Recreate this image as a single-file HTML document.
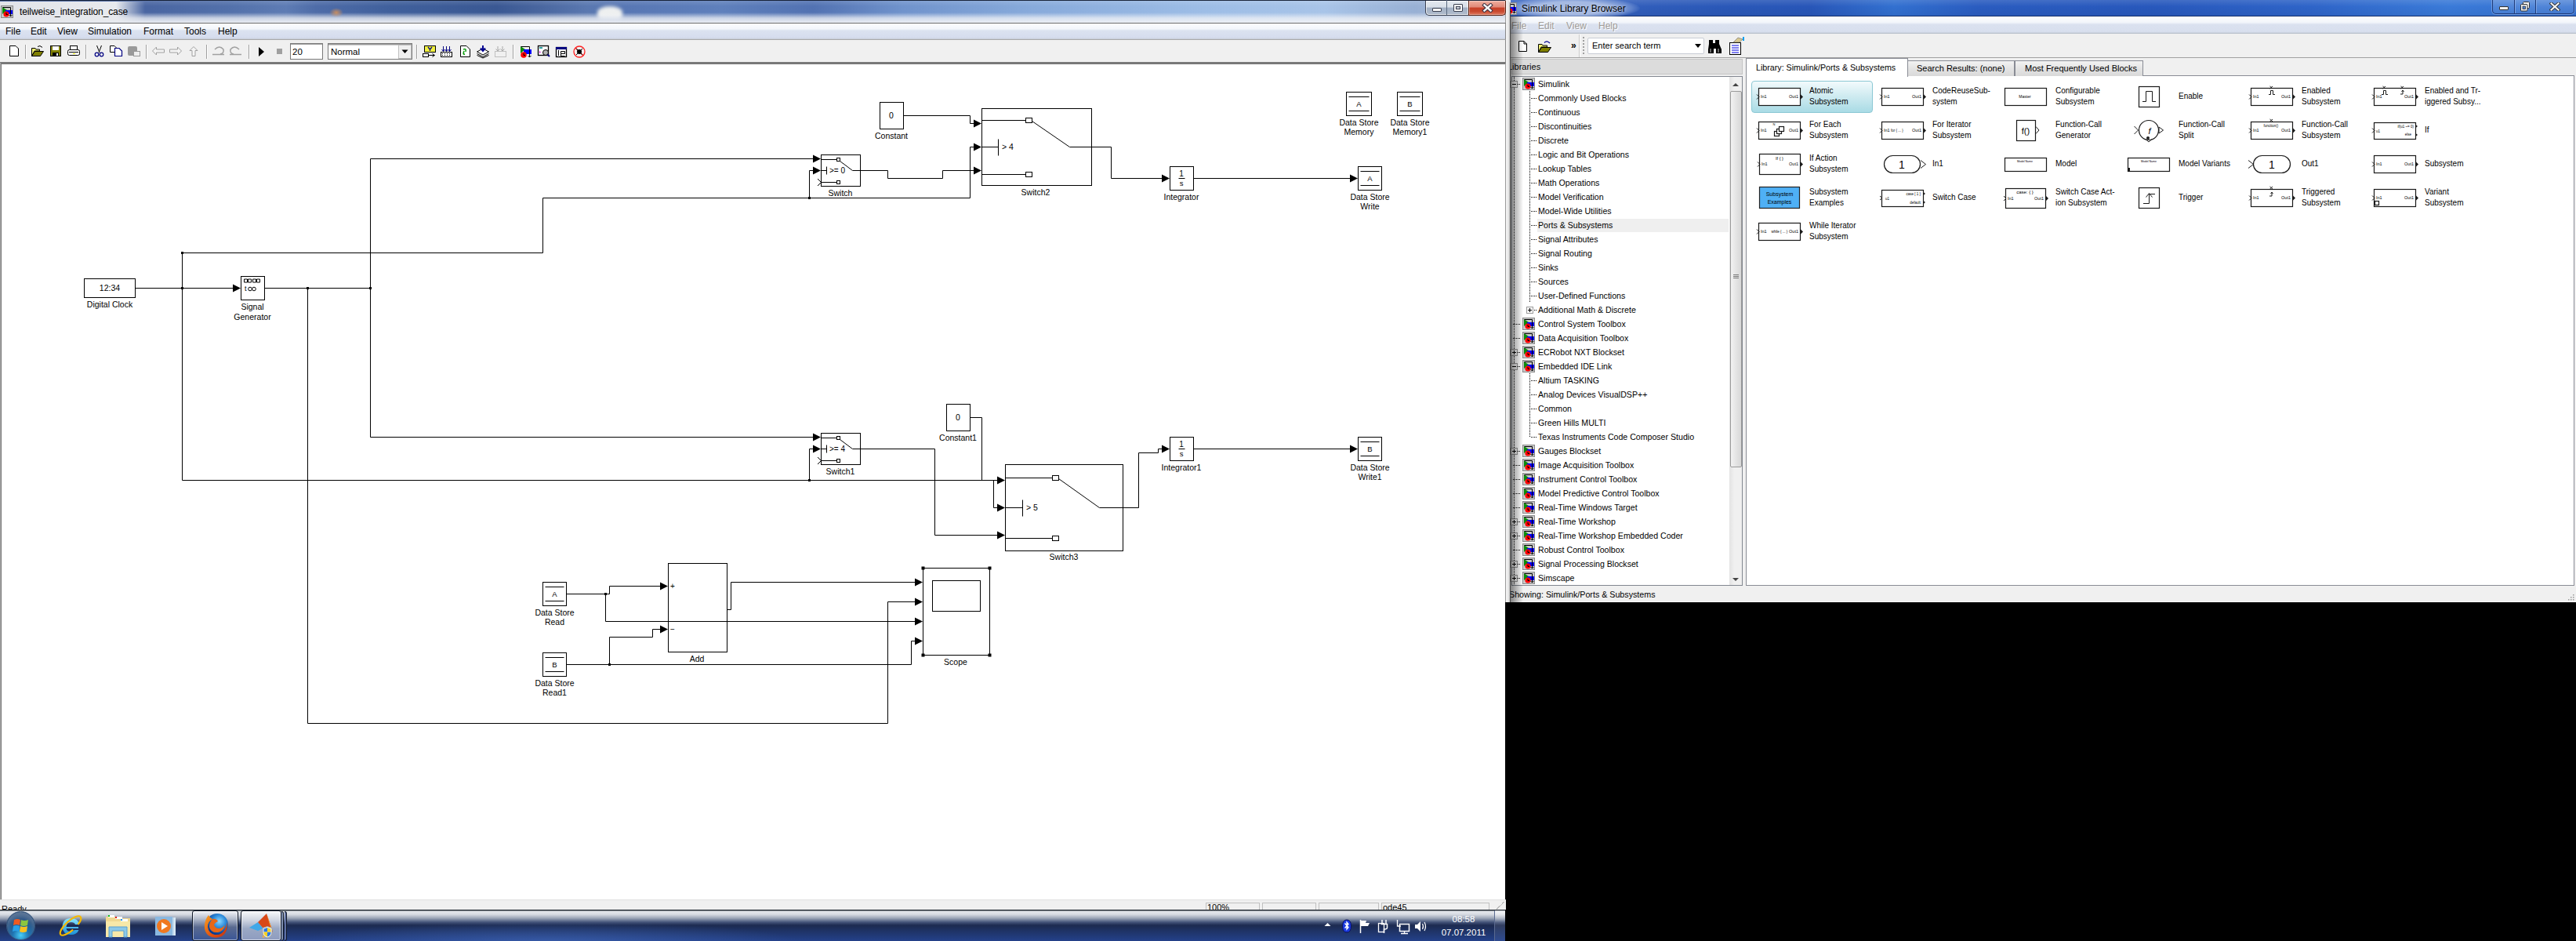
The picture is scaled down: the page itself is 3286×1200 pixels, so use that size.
<!DOCTYPE html>
<html><head><meta charset="utf-8"><title>Simulink</title>
<style>
*{margin:0;padding:0;box-sizing:border-box}
html,body{width:3286px;height:1200px;overflow:hidden;background:#000;font-family:"Liberation Sans", sans-serif;}
.a{position:absolute}
.dg{position:absolute;left:0;top:0}
.dg path,.dg rect,.dg circle{fill:none;stroke:#000;stroke-width:1}
.dg .f{fill:#000;stroke:none}
.dg text{fill:#000;stroke:none;font-family:"Liberation Sans", sans-serif}
.bx{fill:#fff;stroke:#1a1a1a;stroke-width:1.2}
.pt{fill:none;stroke:#1a1a1a;stroke-width:1}
.ft{fill:#1a1a1a;stroke:none}
.tn{fill:#000;font-family:"Liberation Sans", sans-serif}
</style></head><body>
<svg width="0" height="0" style="position:absolute"><defs>
<g id="libicon"><rect x="0.5" y="0.5" width="15" height="15" fill="#c8c8c8" stroke="#8a8a8a"/><path d="M2,2 L2,11 L8,6 Z" fill="#0a8a0a"/><rect x="6" y="6" width="9" height="5" fill="#0000ff"/><circle cx="7" cy="11" r="3.6" fill="#ff0000"/><path d="M2.5,2.5 H12.5 V14 M10.5,12 L12.5,14 L14.5,12 M7,9 V11.5 H9" fill="none" stroke="#000" stroke-width="1"/></g>
<g id="libicon2"><path d="M1,1 L1,10 L7,5 Z" fill="#0a8a0a"/><rect x="5" y="5" width="10" height="6" fill="#0000ff"/><circle cx="5" cy="12" r="3.8" fill="#ff0000"/><path d="M1.5,1.5 H12.5 V15 M10.5,13 L12.5,15 L14.5,13 M5,10 V12.5 H7" fill="none" stroke="#000" stroke-width="1"/></g>
</defs></svg>
<div class="a" style="left:0;top:0;width:1927px;height:768px;background:#eef0f3"></div><div class="a" style="left:1920px;top:0;width:7px;height:768px;background:linear-gradient(90deg,#9a9a9a 0px,#9a9a9a 1px,#f6f6f6 1px,#e8e8e8 4px,#d0d0d0 5.5px,#4a4a4a 6px,#4a4a4a 7px);border-top-right-radius:6px"></div><div class="a" style="left:0;top:0;width:1920px;height:29px;background:linear-gradient(90deg,#4a66a2 0%,#4a66a2 10%,#5270aa 15%,#5e7cb4 19%,#4e6ca8 21%,#40609c 26%,#3a5893 33%,#4a67a0 36%,#5a78b0 39%,#5877b4 41.5%,#5f80bc 48%,#5272b2 54%,#7093cc 60%,#86a9da 68%,#9dbde6 80%,#a8c4e8 88%,#98b0d4 94%,#b8c6dc 100%)"></div><div class="a" style="left:762px;top:8px;width:32px;height:16px;border-radius:50% 50% 20% 20%;background:#eef0f0;filter:blur(2px)"></div><div class="a" style="left:0;top:0;width:1920px;height:29px;background:linear-gradient(rgba(20,30,50,.95) 0px,rgba(20,30,50,.95) 1px,rgba(255,255,255,.12) 1px,rgba(255,255,255,0) 8px,rgba(255,255,255,0) 16px,rgba(240,242,246,.75) 23px,rgba(240,242,246,.95) 29px)"></div><div class="a" style="left:420px;top:10px;width:18px;height:12px;border-radius:50%;background:radial-gradient(rgba(230,150,80,.8),rgba(230,150,80,0) 70%)"></div><div class="a" style="left:0;top:2px;width:185px;height:26px;background:linear-gradient(90deg,#e2e4e9 0%,#e8eaee 80%,rgba(232,234,238,0) 100%)"></div><div class="a" style="left:25px;top:8px;font-size:12px;color:#000;white-space:nowrap;letter-spacing:-0.1px">teilweise_integration_case</div><svg class="a" style="left:1px;top:7px" width="16" height="16"><use href="#libicon"/></svg><div class="a" style="left:1818px;top:1px;width:56px;height:19px;border:1px solid #3a4050;border-top:none;border-radius:0 0 0 5px;background:linear-gradient(#e4e9f0,#d8dfe8 45%,#a2b0c4 50%,#b0bccc);box-shadow:inset 0 0 0 1px rgba(255,255,255,.7)"></div><div class="a" style="left:1845px;top:0;width:1px;height:19px;background:#5a6a80"></div><div class="a" style="left:1827px;top:10px;width:12px;height:5px;background:#f8f8f8;border:1px solid #3a4050;border-radius:1px"></div><div class="a" style="left:1854px;top:5px;width:12px;height:10px;border:1px solid #3a4050;background:#f8f8f8;border-radius:1px"><div class="a" style="left:2px;top:2px;width:6px;height:4px;border:1px solid #3a4050;background:#c8ccd8"></div></div><div class="a" style="left:1873px;top:1px;width:48px;height:19px;border:1px solid #5a2010;border-top:none;border-radius:0 0 5px 0;background:linear-gradient(#f0b0a0,#e08878 45%,#c84028 50%,#c84a30 75%,#e07a60);box-shadow:inset 0 0 0 1px rgba(255,255,255,.35)"></div><svg class="a" style="left:1890px;top:4px" width="15" height="12"><path d="M3.5,2.5 L11.5,9.5 M11.5,2.5 L3.5,9.5" stroke="#3a3040" stroke-width="4.5" stroke-linecap="square"/><path d="M3.5,2.5 L11.5,9.5 M11.5,2.5 L3.5,9.5" stroke="#f8f8f8" stroke-width="2.5" stroke-linecap="square"/></svg><div class="a" style="left:0;top:29px;width:1921px;height:21px;border-top:1px solid #6e6e6e;border-right:1px solid #888;background:linear-gradient(#fbfcfe 0%,#f3f6fb 35%,#dbe2f0 45%,#d6ddee 88%,#c8ced9 100%)"></div><div class="a" style="left:7px;top:33px;font-size:12px;color:#000">File</div><div class="a" style="left:39px;top:33px;font-size:12px;color:#000">Edit</div><div class="a" style="left:73px;top:33px;font-size:12px;color:#000">View</div><div class="a" style="left:112px;top:33px;font-size:12px;color:#000">Simulation</div><div class="a" style="left:183px;top:33px;font-size:12px;color:#000">Format</div><div class="a" style="left:235px;top:33px;font-size:12px;color:#000">Tools</div><div class="a" style="left:278px;top:33px;font-size:12px;color:#000">Help</div><div class="a" style="left:0;top:50px;width:1921px;height:31px;background:#f0f0f0;border-top:1px solid #a8a8a8;border-bottom:2px solid #7a7a7a;border-right:1px solid #888"></div><svg class="a" style="left:0;top:0" width="760" height="82"><rect x="32" y="57" width="1" height="18" fill="#a0a0a0"/><rect x="33" y="57" width="1" height="18" fill="#fff"/><rect x="109" y="57" width="1" height="18" fill="#a0a0a0"/><rect x="110" y="57" width="1" height="18" fill="#fff"/><rect x="186" y="57" width="1" height="18" fill="#a0a0a0"/><rect x="187" y="57" width="1" height="18" fill="#fff"/><rect x="263" y="57" width="1" height="18" fill="#a0a0a0"/><rect x="264" y="57" width="1" height="18" fill="#fff"/><rect x="317" y="57" width="1" height="18" fill="#a0a0a0"/><rect x="318" y="57" width="1" height="18" fill="#fff"/><rect x="531" y="57" width="1" height="18" fill="#a0a0a0"/><rect x="532" y="57" width="1" height="18" fill="#fff"/><rect x="654" y="57" width="1" height="18" fill="#a0a0a0"/><rect x="655" y="57" width="1" height="18" fill="#fff"/><path d="M12.5,58.5 H20 L23.5,62 V71.5 H12.5 Z" fill="#fff" stroke="#000"/><path d="M40.5,61.5 H45 L46,63 H50.5 V65 H44 L40.5,71.5 Z" fill="#f0f070" stroke="#000"/><path d="M40.5,71.5 L44.5,65.5 H55.5 L51.5,71.5 Z" fill="#7f7f00" stroke="#000"/><path d="M48,59.5 Q51,57 54,60.5" fill="none" stroke="#000"/><rect x="64.5" y="58.5" width="13" height="13" fill="#808000" stroke="#000"/><rect x="67" y="59" width="8" height="5" fill="#fff"/><rect x="67" y="67" width="8" height="4.5" fill="#000"/><rect x="72" y="68" width="2" height="3" fill="#fff"/><rect x="89.5" y="58.5" width="9" height="5" fill="#fff" stroke="#000"/><rect x="86.5" y="63.5" width="15" height="7" rx="2" fill="#fff" stroke="#000"/><rect x="88" y="66" width="12" height="1" fill="#000"/><rect x="93" y="68" width="3" height="1" fill="#e0e000"/><path d="M123.5,58 L127,67 M129.5,58 L126,67" stroke="#000" fill="none"/><circle cx="123.5" cy="69.5" r="2.3" fill="none" stroke="#000080" stroke-width="1.2"/><circle cx="129.5" cy="69.5" r="2.3" fill="none" stroke="#000080" stroke-width="1.2"/><path d="M140.5,58.5 H146 L148.5,61 V66.5 H140.5 Z" fill="#fff" stroke="#000"/><path d="M146.5,61.5 H152 L155.5,65 V71.5 H146.5 Z" fill="#fff" stroke="#000080" stroke-width="1.2"/><rect x="163" y="59" width="12" height="12" rx="2" fill="#9a9a9a"/><rect x="170.5" y="65.5" width="8" height="6" fill="#eee" stroke="#9a9a9a"/><path d="M194.5,65 L199.5,60 V63 H209.5 V67 H199.5 V70 Z" fill="#f4f4f4" stroke="#a0a0a0"/><path d="M231.5,65 L226.5,60 V63 H216.5 V67 H226.5 V70 Z" fill="#f4f4f4" stroke="#a0a0a0"/><path d="M247,59.5 L252,64.5 H249 V71.5 H245 V64.5 H242 Z" fill="#f4f4f4" stroke="#a0a0a0"/><path d="M274,63 Q280,57 285,63 Q286,68 281,69" fill="none" stroke="#a0a0a0" stroke-width="1.5"/><path d="M271,69.5 H286" stroke="#a0a0a0" stroke-width="1.5"/><path d="M305,63 Q299,57 294,63 Q293,68 298,69" fill="none" stroke="#a0a0a0" stroke-width="1.5"/><path d="M293,69.5 H308" stroke="#a0a0a0" stroke-width="1.5"/><path d="M330,60 L337,66 L330,72 Z" fill="#000"/><rect x="353" y="62" width="7" height="7" fill="#a0a0a0"/><rect x="370.5" y="55.5" width="41" height="20" fill="#fff" stroke="#7a7a7a"/><rect x="371" y="56" width="40" height="1" fill="#a0a0a0"/><text x="373" y="70" font-size="11.5" fill="#000" font-family="Liberation Sans">20</text><rect x="418.5" y="55.5" width="107" height="20" fill="#fff" stroke="#7a7a7a"/><rect x="419" y="56" width="106" height="1.5" fill="#9a9a9a"/><rect x="508.5" y="57.5" width="16" height="17" fill="#f0f0f0" stroke="#c0c0c0"/><path d="M512.5,63.5 H520.5 L516.5,68 Z" fill="#000"/><text x="422" y="70" font-size="11.5" fill="#000" font-family="Liberation Sans">Normal</text><rect x="541.5" y="58.5" width="14" height="8" fill="#f0f040" stroke="#000"/><path d="M546,60 L548.5,63 L551,60 M548.5,63 V65" stroke="#000080" stroke-width="1.3" fill="none"/><rect x="539.5" y="68.5" width="7" height="4" fill="#fff" stroke="#000"/><path d="M546.5,70.5 H554 M551.5,68.5 L554.5,70.5 L551.5,72.5" stroke="#000" fill="none"/><rect x="562.5" y="66.5" width="14" height="6" fill="#fff" stroke="#000"/><path d="M564,68.5 h1 m2,0 h1 m2,0 h1 m2,0 h1 M564,70.5 h1 m2,0 h1 m2,0 h1 m2,0 h1" stroke="#000"/><path d="M565.5,59 V65 M569.5,59 V65 M573.5,59 V65 M563.5,63 L565.5,65.5 L567.5,63 M567.5,63 L569.5,65.5 L571.5,63 M571.5,63 L573.5,65.5 L575.5,63" stroke="#000080" fill="none"/><path d="M587.5,58.5 H595 L599.5,63 V72.5 H587.5 Z" fill="#fff" stroke="#000"/><path d="M591,63 Q595,61 594,66 M593,69 Q590,70 592,65" stroke="#10a010" stroke-width="1.6" fill="none"/><path d="M608.5,66 L616,62 L623.5,66 L616,70 Z" fill="#fff" stroke="#000"/><path d="M608.5,68.5 L616,72.5 L623.5,68.5 M608.5,70.5 L616,74 L623.5,70.5" stroke="#000" fill="none"/><path d="M616,58 V64 M613,61.5 L616,65 L619,61.5" stroke="#000090" stroke-width="2" fill="none"/><rect x="631.5" y="65.5" width="14" height="7" fill="none" stroke="#c0c0c0"/><path d="M635,59 V65 M641,59 V65 M632.5,62.5 L635,65 L637.5,62.5 M638.5,62.5 L641,65 L643.5,62.5" stroke="#a8a8a8" fill="none"/><svg x="663" y="58" width="16" height="16"><use href="#libicon2"/></svg><rect x="686.5" y="58.5" width="13" height="12" fill="#fff" stroke="#000" stroke-width="1.3"/><rect x="688" y="60" width="4" height="2" fill="#30a0a0"/><path d="M688,65 L690,66.5 L688,68 Z" fill="#e020e0"/><circle cx="696" cy="67" r="3.5" fill="#b0b0b0" stroke="#000"/><path d="M698.5,69.5 L701,72" stroke="#000080" stroke-width="2"/><rect x="709.5" y="60.5" width="13" height="12" fill="#fff" stroke="#000" stroke-width="1.3"/><rect x="709" y="60" width="14" height="3" fill="#000080"/><rect x="712" y="64" width="1" height="7" fill="#000"/><path d="M715.5,65.5 h5 v3 h-5 z M715.5,68.5 v3 h5" fill="none" stroke="#000"/><circle cx="739" cy="66" r="7" fill="none" stroke="#ff2020" stroke-width="1.3"/><path d="M734,61 L744,71" stroke="#ff2020" stroke-width="1.3"/><circle cx="739" cy="66" r="3" fill="#000"/><path d="M735,62 l2,2 M743,62 l-2,2 M735,70 l2,-2 M743,70 l-2,-2" stroke="#000"/></svg><div class="a" style="left:0;top:81px;width:1920px;height:1067px;background:#fff;border-left:2px solid #767676;border-top:1px solid #767676"></div><div class="a" style="left:0;top:80px;width:1px;height:1067px;background:#a8a8a8"></div><svg class="dg" width="1920" height="1200" viewBox="0 0 1920 1200"><rect x="107.5" y="355.5" width="65" height="24"/><text x="140" y="370.5" font-size="10.5" text-anchor="middle" class="lbl">12:34</text><text x="140" y="392" font-size="10.5" text-anchor="middle" class="lbl">Digital Clock</text><rect x="307.5" y="352.5" width="30" height="30"/><text x="322" y="394.5" font-size="10.5" text-anchor="middle" class="lbl">Signal</text><text x="322" y="407.5" font-size="10.5" text-anchor="middle" class="lbl">Generator</text><path d="M311.5,360 h4 v-4 h-4 z M316.5,360 h4 v-4 h-4 z M322.5,360 h4 v-4 h-4 z M327.5,360 h4 v-4 h-4 z" fill="none"/><text x="312" y="371" font-size="9" text-anchor="start" class="lbl">t</text><circle cx="319" cy="368.5" r="2.3"/><circle cx="324" cy="368.5" r="2.3"/><rect x="1122.5" y="130.5" width="30" height="34"/><text x="1137" y="150.5" font-size="10.5" text-anchor="middle" class="lbl">0</text><text x="1137" y="176.5" font-size="10.5" text-anchor="middle" class="lbl">Constant</text><rect x="1207.5" y="515.5" width="30" height="34"/><text x="1222" y="535.5" font-size="10.5" text-anchor="middle" class="lbl">0</text><text x="1222" y="562" font-size="10.5" text-anchor="middle" class="lbl">Constant1</text><rect x="1047.5" y="197.5" width="50" height="40"/><path d="M1047.5,203.5 L1067.5,203.5"/><rect x="1067.5" y="201.5" width="4" height="4"/><path d="M1071.5,205.5 L1087.5,217.5 L1097.5,217.5"/><path d="M1047.5,217.5 L1054.5,217.5"/><path d="M1054.5,212.5 L1054.5,222.5"/><text x="1058" y="221" font-size="10" text-anchor="start" class="lbl">&gt;= 0</text><path d="M1047.5,232.5 L1067.5,232.5"/><rect x="1067.5" y="230.5" width="4" height="4"/><path d="M1043,228 L1047.5,232.5 L1043,237"/><text x="1072" y="249.5" font-size="10.5" text-anchor="middle" class="lbl">Switch</text><rect x="1047.5" y="552.5" width="50" height="40"/><path d="M1047.5,558.5 L1067.5,558.5"/><rect x="1067.5" y="556.5" width="4" height="4"/><path d="M1071.5,560.5 L1087.5,572.5 L1097.5,572.5"/><path d="M1047.5,572.5 L1054.5,572.5"/><path d="M1054.5,567.5 L1054.5,577.5"/><text x="1058" y="576" font-size="10" text-anchor="start" class="lbl">&gt;= 4</text><path d="M1047.5,587.5 L1067.5,587.5"/><rect x="1067.5" y="585.5" width="4" height="4"/><path d="M1043,583 L1047.5,587.5 L1043,592"/><text x="1072" y="604.5" font-size="10.5" text-anchor="middle" class="lbl">Switch1</text><rect x="1252.5" y="138.5" width="140" height="98"/><path d="M1252.5,153.5 L1308.5,153.5"/><rect x="1308.5" y="150.5" width="8" height="6"/><path d="M1316.5,154.5 L1364.5,187.5 L1392.5,187.5"/><path d="M1252.5,187.5 L1273.5,187.5"/><path d="M1273.5,177.5 L1273.5,198.5"/><text x="1278" y="191" font-size="10.5" text-anchor="start" class="lbl">&gt; 4</text><path d="M1252.5,222.5 L1308.5,222.5"/><rect x="1308.5" y="219.5" width="8" height="6"/><text x="1321" y="248.5" font-size="10.5" text-anchor="middle" class="lbl">Switch2</text><rect x="1282.5" y="592.5" width="150" height="110"/><path d="M1282.5,609.5 L1342.5,609.5"/><rect x="1342.5" y="606.5" width="8" height="6"/><path d="M1350.5,610.5 L1402.5,647.5 L1432.5,647.5"/><path d="M1282.5,647.5 L1304.5,647.5"/><path d="M1304.5,637.5 L1304.5,658.5"/><text x="1309" y="651" font-size="10.5" text-anchor="start" class="lbl">&gt; 5</text><path d="M1282.5,686.5 L1342.5,686.5"/><rect x="1342.5" y="683.5" width="8" height="6"/><text x="1357" y="714" font-size="10.5" text-anchor="middle" class="lbl">Switch3</text><rect x="1492.5" y="212.5" width="30" height="30"/><text x="1507" y="224.5" font-size="10" text-anchor="middle" class="lbl">1</text><path d="M1503.5,227.5 L1511.5,227.5"/><text x="1507" y="237" font-size="9.5" text-anchor="middle" class="lbl">s</text><text x="1507" y="254.5" font-size="10.5" text-anchor="middle" class="lbl">Integrator</text><rect x="1492.5" y="557.5" width="30" height="30"/><text x="1507" y="569.5" font-size="10" text-anchor="middle" class="lbl">1</text><path d="M1503.5,572.5 L1511.5,572.5"/><text x="1507" y="582" font-size="9.5" text-anchor="middle" class="lbl">s</text><text x="1507" y="599.5" font-size="10.5" text-anchor="middle" class="lbl">Integrator1</text><rect x="1732.5" y="212.5" width="30" height="30"/><path d="M1735.5,218.5 L1759.5,218.5"/><path d="M1735.5,236.5 L1759.5,236.5"/><text x="1747.5" y="230.5" font-size="9.5" text-anchor="middle" class="lbl">A</text><text x="1747.5" y="254.5" font-size="10.5" text-anchor="middle" class="lbl">Data Store</text><text x="1747.5" y="267" font-size="10.5" text-anchor="middle" class="lbl">Write</text><rect x="1732.5" y="557.5" width="30" height="30"/><path d="M1735.5,563.5 L1759.5,563.5"/><path d="M1735.5,581.5 L1759.5,581.5"/><text x="1747.5" y="575.5" font-size="9.5" text-anchor="middle" class="lbl">B</text><text x="1747.5" y="599.5" font-size="10.5" text-anchor="middle" class="lbl">Data Store</text><text x="1747.5" y="612" font-size="10.5" text-anchor="middle" class="lbl">Write1</text><rect x="1717.5" y="117.5" width="32" height="30"/><path d="M1720.5,123.5 L1746.5,123.5"/><path d="M1720.5,141.5 L1746.5,141.5"/><text x="1733.5" y="135.5" font-size="9.5" text-anchor="middle" class="lbl">A</text><text x="1733.5" y="159.5" font-size="10.5" text-anchor="middle" class="lbl">Data Store</text><text x="1733.5" y="172" font-size="10.5" text-anchor="middle" class="lbl">Memory</text><rect x="1782.5" y="117.5" width="32" height="30"/><path d="M1785.5,123.5 L1811.5,123.5"/><path d="M1785.5,141.5 L1811.5,141.5"/><text x="1798.5" y="135.5" font-size="9.5" text-anchor="middle" class="lbl">B</text><text x="1798.5" y="159.5" font-size="10.5" text-anchor="middle" class="lbl">Data Store</text><text x="1798.5" y="172" font-size="10.5" text-anchor="middle" class="lbl">Memory1</text><rect x="692.5" y="742.5" width="30" height="30"/><path d="M695.5,748.5 L719.5,748.5"/><path d="M695.5,766.5 L719.5,766.5"/><text x="707.5" y="760.5" font-size="9.5" text-anchor="middle" class="lbl">A</text><text x="707.5" y="784.5" font-size="10.5" text-anchor="middle" class="lbl">Data Store</text><text x="707.5" y="797" font-size="10.5" text-anchor="middle" class="lbl">Read</text><rect x="692.5" y="832.5" width="30" height="30"/><path d="M695.5,838.5 L719.5,838.5"/><path d="M695.5,856.5 L719.5,856.5"/><text x="707.5" y="850.5" font-size="9.5" text-anchor="middle" class="lbl">B</text><text x="707.5" y="874.5" font-size="10.5" text-anchor="middle" class="lbl">Data Store</text><text x="707.5" y="887" font-size="10.5" text-anchor="middle" class="lbl">Read1</text><rect x="852.5" y="718.5" width="75" height="113"/><text x="858" y="751" font-size="10" text-anchor="middle" class="lbl">+</text><text x="858" y="806" font-size="10" text-anchor="middle" class="lbl">−</text><text x="889" y="843.5" font-size="10.5" text-anchor="middle" class="lbl">Add</text><rect x="1177.5" y="724.5" width="85" height="111"/><rect x="1189.5" y="740.5" width="61" height="39"/><text x="1219" y="847.5" font-size="10.5" text-anchor="middle" class="lbl">Scope</text><rect class="f" x="1175.5" y="722.5" width="4" height="4"/><rect class="f" x="1260.5" y="722.5" width="4" height="4"/><rect class="f" x="1175.5" y="833.5" width="4" height="4"/><rect class="f" x="1260.5" y="833.5" width="4" height="4"/><path d="M172.5,367.5 L297.5,367.5"/><path class="f" d="M297,362.5 L307,367.5 L297,372.5 Z"/><rect class="f" x="231" y="366" width="3" height="3"/><rect class="f" x="231" y="321" width="3" height="3"/><path d="M232.5,322.5 L232.5,612.5"/><path d="M232.5,322.5 L692.5,322.5 L692.5,252.5 L1237.5,252.5 L1237.5,187.5 L1242.5,187.5"/><path class="f" d="M1242,182.5 L1252,187.5 L1242,192.5 Z"/><rect class="f" x="1031" y="251" width="3" height="3"/><path d="M1032.5,252.5 L1032.5,217.5 L1037.5,217.5"/><path class="f" d="M1037,212.5 L1047,217.5 L1037,222.5 Z"/><path d="M232.5,612.5 L1272.5,612.5"/><path class="f" d="M1272,607.5 L1282,612.5 L1272,617.5 Z"/><rect class="f" x="1031" y="611" width="3" height="3"/><path d="M1032.5,612.5 L1032.5,572.5 L1037.5,572.5"/><path class="f" d="M1037,567.5 L1047,572.5 L1037,577.5 Z"/><path d="M1267.5,612.5 L1267.5,647.5 L1272.5,647.5"/><path class="f" d="M1272,642.5 L1282,647.5 L1272,652.5 Z"/><path d="M1237.5,532.5 L1252.5,532.5 L1252.5,612.5"/><path d="M337.5,367.5 L472.5,367.5"/><rect class="f" x="391" y="366" width="3" height="3"/><rect class="f" x="471" y="366" width="3" height="3"/><path d="M392.5,367.5 L392.5,922.5 L1132.5,922.5 L1132.5,767.5 L1167.5,767.5"/><path class="f" d="M1167,762.5 L1177,767.5 L1167,772.5 Z"/><path d="M472.5,202.5 L472.5,557.5"/><path d="M472.5,202.5 L1037.5,202.5"/><path class="f" d="M1037,197.5 L1047,202.5 L1037,207.5 Z"/><path d="M472.5,557.5 L1037.5,557.5"/><path class="f" d="M1037,552.5 L1047,557.5 L1037,562.5 Z"/><path d="M1097.5,217.5 L1132.5,217.5 L1132.5,227.5 L1202.5,227.5 L1202.5,217.5 L1242.5,217.5"/><path class="f" d="M1242,212.5 L1252,217.5 L1242,222.5 Z"/><path d="M1152.5,147.5 L1237.5,147.5 L1237.5,157.5 L1242.5,157.5"/><path class="f" d="M1242,152.5 L1252,157.5 L1242,162.5 Z"/><path d="M1392.5,187.5 L1417.5,187.5 L1417.5,227.5 L1482.5,227.5"/><path class="f" d="M1482,222.5 L1492,227.5 L1482,232.5 Z"/><path d="M1522.5,227.5 L1722.5,227.5"/><path class="f" d="M1722,222.5 L1732,227.5 L1722,232.5 Z"/><path d="M1097.5,572.5 L1192.5,572.5 L1192.5,682.5 L1272.5,682.5"/><path class="f" d="M1272,677.5 L1282,682.5 L1272,687.5 Z"/><path d="M1432.5,647.5 L1452.5,647.5 L1452.5,577.5 L1477.5,577.5 L1477.5,572.5 L1482.5,572.5"/><path class="f" d="M1482,567.5 L1492,572.5 L1482,577.5 Z"/><path d="M1522.5,572.5 L1722.5,572.5"/><path class="f" d="M1722,567.5 L1732,572.5 L1722,577.5 Z"/><path d="M722.5,757.5 L777.5,757.5 L777.5,747.5 L842.5,747.5"/><path class="f" d="M842,742.5 L852,747.5 L842,752.5 Z"/><rect class="f" x="771" y="756" width="3" height="3"/><path d="M772.5,757.5 L772.5,792.5 L1167.5,792.5"/><path class="f" d="M1167,787.5 L1177,792.5 L1167,797.5 Z"/><path d="M722.5,847.5 L1162.5,847.5 L1162.5,817.5 L1167.5,817.5"/><path class="f" d="M1167,812.5 L1177,817.5 L1167,822.5 Z"/><rect class="f" x="776" y="846" width="3" height="3"/><path d="M777.5,847.5 L777.5,812.5 L832.5,812.5 L832.5,802.5 L842.5,802.5"/><path class="f" d="M842,797.5 L852,802.5 L842,807.5 Z"/><path d="M927.5,777.5 L932.5,777.5 L932.5,742.5 L1167.5,742.5"/><path class="f" d="M1167,737.5 L1177,742.5 L1167,747.5 Z"/></svg><div class="a" style="left:0;top:1147px;width:1921px;height:13px;background:#f0f0f0;border-top:1px solid #e0e0e0;overflow:hidden"><div class="a" style="left:2px;top:5px;font-size:11px;color:#000">Ready</div></div><div class="a" style="left:1538px;top:1151px;width:69px;height:9px;border:1px solid #c0c0c0;border-bottom:none;overflow:hidden"><div class="a" style="left:1px;top:-1px;font-size:11px;color:#000">100%</div></div><div class="a" style="left:1610px;top:1151px;width:69px;height:9px;border:1px solid #c0c0c0;border-bottom:none;overflow:hidden"><div class="a" style="left:1px;top:-1px;font-size:11px;color:#000"></div></div><div class="a" style="left:1682px;top:1151px;width:77px;height:9px;border:1px solid #c0c0c0;border-bottom:none;overflow:hidden"><div class="a" style="left:1px;top:-1px;font-size:11px;color:#000"></div></div><div class="a" style="left:1762px;top:1151px;width:138px;height:9px;border:1px solid #c0c0c0;border-bottom:none;overflow:hidden"><div class="a" style="left:1px;top:-1px;font-size:11px;color:#000">ode45</div></div><div class="a" style="left:1900px;top:1150px;width:20px;height:10px;background:linear-gradient(135deg,transparent 60%,#bbb 60%,#bbb 65%,transparent 65%)"></div><div class="a" style="left:0;top:1160px;width:1920px;height:40px;background:linear-gradient(#202830 0px,#202830 1px,#e4e7ec 2px,#d8dce3 6px,#9aa4b6 11px,#44547a 16px,#1c2a50 20px,#1f3468 28px,#24418a 40px)"></div><div class="a" style="left:0;top:1161px;width:1920px;height:39px;background:radial-gradient(ellipse 320px 26px at 700px 40px,rgba(70,110,190,.55),rgba(70,110,190,0))"></div><div class="a" style="left:8px;top:1162px;width:37px;height:37px;border-radius:50%;background:radial-gradient(circle at 50% 85%,#4ad0f8 0%,#1a70b0 30%,#0c3a70 60%,#0a2a58 100%);border:1px solid #3a5a80;box-shadow:inset 0 8px 10px rgba(255,255,255,.35)"></div><svg class="a" style="left:14px;top:1168px" width="26" height="26"><path d="M4,5 Q8,3 12,5 L11,12 Q7,10 3,12 Z" fill="#f05a20"/><path d="M13,5 Q17,7 22,5 L21,12 Q16,14 12,12 Z" fill="#8cc63f"/><path d="M3,13 Q7,11 11,13 L10,20 Q6,18 2,20 Z" fill="#2aa0e8"/><path d="M12,13 Q16,15 21,13 L20,20 Q15,22 11,20 Z" fill="#f8c020"/></svg><svg class="a" style="left:73px;top:1163px" width="34" height="34"><defs><linearGradient id="ieg" x1="0" y1="0" x2="0" y2="1"><stop offset="0" stop-color="#8ae8ff"/><stop offset="1" stop-color="#1a90d8"/></linearGradient></defs><path d="M27,19 H11.5 Q12,13 17.5,13 Q22,13 23,16 H28 Q27,8 17.5,8 Q7,8 6.5,19 Q7,29 17.5,29 Q25,29 27.5,23 H22 Q20.5,25 17.5,25 Q12,25 11.5,21 H27 Z" fill="url(#ieg)"/><ellipse cx="17" cy="17.5" rx="17" ry="6" transform="rotate(-42 17 17.5)" fill="none" stroke="#f4b800" stroke-width="2.2" stroke-dasharray="60 9" stroke-dashoffset="-20"/></svg><svg class="a" style="left:134px;top:1166px" width="34" height="30"><path d="M1,3 H14 L16,5 H32 V29 H1 Z" fill="#f0d890"/><rect x="4" y="1" width="8" height="3" fill="#fff"/><rect x="4" y="1" width="2" height="2" fill="#10c010"/><rect x="13" y="3" width="9" height="3" fill="#fff"/><rect x="13" y="3" width="2" height="2" fill="#e02020"/><rect x="20" y="6" width="9" height="3" fill="#fff"/><rect x="20" y="6" width="2" height="2" fill="#2090f0"/><path d="M1,9 H32 V29 H1 Z" fill="#f8e8a8"/><path d="M5,16 H28 V29 H24 V21 H9 V29 H5 Z" fill="#8cc8e8" stroke="#5aa0d0"/></svg><svg class="a" style="left:198px;top:1169px" width="30" height="26"><rect x="5" y="1" width="21" height="23" fill="#d8e8f4"/><rect x="3" y="1" width="21" height="23" fill="#c0d8ec"/><rect x="0" y="0" width="22" height="24" fill="#8ab8e0"/><circle cx="11" cy="12" r="9" fill="#f07820"/><path d="M8,7 L16,12 L8,17 Z" fill="#fff"/></svg><div class="a" style="left:245px;top:1161px;width:59px;height:39px;border:1px solid #101828;border-radius:3px;background:linear-gradient(#f2f4f8 0%,#b8c0d0 25%,#5a6a90 55%,#3a5698 100%);box-shadow:inset 0 0 0 1px rgba(255,255,255,.5)"></div><svg class="a" style="left:259px;top:1163px" width="34" height="34"><defs><radialGradient id="ffg" cx="60%" cy="35%" r="60%"><stop offset="0" stop-color="#8ad8ff"/><stop offset=".5" stop-color="#2a88d8"/><stop offset="1" stop-color="#0a3a90"/></radialGradient><linearGradient id="ffo" x1="0" y1="0" x2="1" y2="1"><stop offset="0" stop-color="#f8a020"/><stop offset=".6" stop-color="#e05010"/><stop offset="1" stop-color="#c03010"/></linearGradient></defs><circle cx="18" cy="16" r="14" fill="url(#ffg)"/><path d="M7,4 Q9,8 12,9 Q6,12 6,19 Q7,27 15,29 Q24,30 28,22 Q31,16 30,11 Q33,25 24,31 Q15,35 7,30 Q1,25 2,16 Q3,9 7,4 Z" fill="url(#ffo)"/><path d="M12,9 Q17,8 19,12 Q16,13 14,16 Q15,21 21,21 Q26,20 28,16 Q27,24 19,26 Q10,27 8,19 Q8,13 12,9 Z" fill="#e86818"/></svg><div class="a" style="left:307px;top:1161px;width:52px;height:39px;border:1px solid #101828;border-radius:3px;background:linear-gradient(#f8f9fb 0%,#d0d6e2 30%,#9aa8c4 60%,#8e9cc0 100%);box-shadow:inset 0 0 0 1px rgba(255,255,255,.6)"></div><div class="a" style="left:359px;top:1162px;width:3px;height:38px;border:1px solid #101828;border-left:none;border-radius:0 3px 3px 0;background:#8090b0"></div><div class="a" style="left:363px;top:1162px;width:3px;height:38px;border:1px solid #101828;border-left:none;border-radius:0 3px 3px 0;background:#6070a0"></div><svg class="a" style="left:316px;top:1164px" width="36" height="34"><path d="M2,19 L13,12 L20,20 L13,23 Z" fill="#40a8e8"/><path d="M13,12 L24,1 L32,24 L26,29 L20,20 Z" fill="#d84818"/><path d="M24,1 L28,15 L32,24 Z" fill="#f8a828"/><path d="M20,20 L26,29 L19,32 Z" fill="#f8b030"/><path d="M19,19.5 L25,17.5 L31,19.5 V25 Q31,30 25,32 Q19,30 19,25 Z" fill="#f4f4f4" stroke="#a0a0a0"/><path d="M20.5,20.5 L25,19 V24.5 H20.5 Z M25,24.5 H29.5 V25.5 Q29.5,29 25,30.5 Z" fill="#2878e8"/><path d="M25,19 L29.5,20.5 V24.5 H25 Z M20.5,24.5 H25 V30.5 Q20.5,29 20.5,25.5 Z" fill="#f8d020"/></svg><svg class="a" style="left:1685px;top:1171px" width="145" height="22"><path d="M4.5,10 L8.5,6 L12.5,10 Z" fill="#fff"/><path d="M33,2 Q27.5,2 27.5,10 Q27.5,18 33,18 Q38.5,18 38.5,10 Q38.5,2 33,2 Z" fill="#1a3ae0" stroke="#0a1060"/><path d="M30.5,6.5 L35,11.5 L33,14 V5 L35,7.5 L30.5,12.5" stroke="#fff" stroke-width="1.3" fill="none"/><path d="M50.5,2 V19" stroke="#fff" stroke-width="1.5"/><path d="M51,3 H58 L57,6 H62 L60,10 H51 Z" fill="#fff"/><rect x="73.5" y="6.5" width="7" height="11" fill="none" stroke="#fff" stroke-width="1.3"/><path d="M78,2 V8 M83,2 V8 M76.5,7.5 H84.5 V12 Q84.5,14 80.5,14 V19" stroke="#fff" stroke-width="1.5" fill="none"/><path d="M97.5,2 V10 H102" stroke="#fff" stroke-width="1.3" fill="none"/><rect x="100.5" y="7.5" width="12" height="9" fill="none" stroke="#fff" stroke-width="1.5"/><path d="M106.5,17 V19 M102,19.5 H111" stroke="#fff" stroke-width="1.3"/><path d="M120,8 H123 L127,4 V17 L123,13 H120 Z" fill="#fff"/><path d="M129.5,7 Q131.5,10.5 129.5,14 M132,5 Q135,10.5 132,16" stroke="#fff" stroke-width="1.2" fill="none"/></svg><div class="a" style="left:1838px;top:1164px;width:58px;text-align:center;font-size:11.5px;color:#fff;line-height:16.5px">08:58<br>07.07.2011</div><div class="a" style="left:1906px;top:1161px;width:14px;height:39px;border-left:1px solid #5a6a90;background:linear-gradient(rgba(255,255,255,.5),rgba(255,255,255,.1) 40%,rgba(255,255,255,.05))"></div><div class="a" id="rw" style="left:1927px;top:0;width:1359px;height:768px;background:#f0f0f0;overflow:hidden"><div class="a" style="left:0;top:0;width:1359px;height:21px;background:linear-gradient(90deg,#3a66c0 0%,#2a58b8 20%,#2856b8 28%,#3270d0 36%,#2a5cc0 44%,#2858bc 60%,#2e64c8 75%,#3a7ad8 88%,#3470d0 100%);border-bottom:1px solid #143070"></div><div class="a" style="left:0;top:0;width:1359px;height:21px;background:linear-gradient(rgba(255,255,255,.12),rgba(255,255,255,0) 40%,rgba(0,0,0,.05))"></div><div class="a" style="left:-10px;top:-4px;width:175px;height:29px;border-radius:50%;background:radial-gradient(ellipse at center,rgba(190,205,235,.8) 40%,rgba(150,175,225,.45) 62%,rgba(120,150,220,0) 72%)"></div><svg class="a" style="left:-8px;top:3px" width="16" height="16"><use href="#libicon"/></svg><div class="a" style="left:14px;top:4px;font-size:12px;color:#000;white-space:nowrap;text-shadow:0 0 4px rgba(255,255,255,.6)">Simulink Library Browser</div><div class="a" style="left:0;top:21px;width:1359px;height:22px;background:linear-gradient(#fcfdfe 0%,#f3f6fb 35%,#dae1ef 50%,#d8dfee 92%,#c9d0dc 100%);border-bottom:1px solid #b9c0cc"></div><div class="a" style="left:1px;top:26px;font-size:12px;color:#a09c98;text-shadow:1px 1px 0 #fff">File</div><div class="a" style="left:35px;top:26px;font-size:12px;color:#a09c98;text-shadow:1px 1px 0 #fff">Edit</div><div class="a" style="left:71px;top:26px;font-size:12px;color:#a09c98;text-shadow:1px 1px 0 #fff">View</div><div class="a" style="left:112px;top:26px;font-size:12px;color:#a09c98;text-shadow:1px 1px 0 #fff">Help</div><div class="a" style="left:0;top:43px;width:1359px;height:31px;background:#f0f0f0;border-bottom:1px solid #a0a0a0"></div><div class="a" style="left:87px;top:44px;width:1px;height:29px;background:#c8c8c8;box-shadow:1px 0 0 #fff"></div><div class="a" style="left:92px;top:47px;width:2px;height:23px;background:repeating-linear-gradient(#a0a0a0 0 2px,transparent 2px 4px)"></div><div class="a" style="left:98px;top:48px;width:149px;height:21px;background:#fff;border:1px solid #c8ccd4;border-radius:2px"></div><div class="a" style="left:104px;top:52px;font-size:11px;color:#000">Enter search term</div><div class="a" style="left:235px;top:56px;width:0;height:0;border-left:4px solid transparent;border-right:4px solid transparent;border-top:5px solid #000"></div><div class="a" style="left:77px;top:51px;font-size:12px;font-weight:bold;color:#000">&#187;</div><svg class="a" style="left:0;top:44px" width="310" height="30"><path d="M10.5,8.5 H17 L20.5,12 V21.5 H10.5 Z" fill="#fff" stroke="#000"/><path d="M17,8.5 V12 H20.5" fill="none" stroke="#000"/><path d="M35.5,12.5 H40 L41,14 H46.5 V16 H39 L35.5,22.5 Z" fill="#f0f070" stroke="#000"/><path d="M35.5,22.5 L39.5,16.5 H51.5 L47.5,22.5 Z" fill="#7f7f00" stroke="#000"/><path d="M43,10.5 Q46,7 50,11" fill="none" stroke="#000090" stroke-width="1.2"/><path d="M253,7 h5 v4 h3 v-4 h5 v5 l3,7 v5 h-7 v-6 h-3 v6 h-7 v-5 l1,-7 z" fill="#000"/><rect x="254" y="18" width="2" height="5" fill="#666"/><rect x="264" y="18" width="2" height="5" fill="#666"/><rect x="279.5" y="10.5" width="14" height="15" fill="#fff" stroke="#000"/><path d="M282,14 h9 M282,17 h9 M282,20 h9 M282,23 h9" stroke="#0000e0"/><path d="M284,10 L290,4 L296,6 L292,10 Z" fill="#d8c890" stroke="#666" stroke-width=".6"/><rect x="296" y="3" width="2" height="5" fill="#10a0f0"/></svg><div class="a" style="left:1px;top:75px;width:295px;height:20px;background:#dcdcdc;border:1px solid #c4c4c4"></div><div class="a" style="left:-4px;top:79px;font-size:11px;color:#000">Libraries</div><div class="a" style="left:1px;top:97px;width:295px;height:650px;background:#fff;border:1px solid #828790"></div><div class="a" style="left:34px;top:279px;width:244px;height:17px;background:#efefef"></div><div class="a" style="left:279px;top:98px;width:16px;height:648px;background:linear-gradient(90deg,#e3e3e3,#f0f0f0 40%,#f0f0f0)"></div><div class="a" style="left:280px;top:116px;width:15px;height:480px;border:1px solid #9a9a9a;border-radius:2px;background:linear-gradient(90deg,#f3f3f3,#e4e4e4 50%,#d8d8d8)"></div><div class="a" style="left:284px;top:350px;width:7px;height:6px;background:repeating-linear-gradient(#777 0 1px,transparent 1px 2px)"></div><div class="a" style="left:283px;top:106px;width:0;height:0;border-left:4px solid transparent;border-right:4px solid transparent;border-bottom:4px solid #444"></div><div class="a" style="left:283px;top:737px;width:0;height:0;border-left:4px solid transparent;border-right:4px solid transparent;border-top:4px solid #444"></div><div class="a" style="left:4px;top:98px;width:1px;height:648px;background:repeating-linear-gradient(#000 0 1px,transparent 1px 2px)"></div><div class="a" style="left:24px;top:116px;width:1px;height:270px;background:repeating-linear-gradient(#000 0 1px,transparent 1px 2px)"></div><div class="a" style="left:24px;top:476px;width:1px;height:81px;background:repeating-linear-gradient(#000 0 1px,transparent 1px 2px)"></div><div class="a" style="left:35px;top:101px;font-size:10.6px;color:#000;white-space:nowrap">Simulink</div><svg class="a" style="left:15px;top:99px" width="16" height="16"><use href="#libicon"/></svg><div class="a" style="left:3px;top:107px;width:10px;height:1px;background:repeating-linear-gradient(90deg,#000 0 1px,transparent 1px 2px)"></div><div class="a" style="left:0px;top:103px;width:9px;height:9px;border:1px solid #999;background:#f4f4f4"><div class="a" style="left:1px;top:3px;width:5px;height:1px;background:#000"></div></div><div class="a" style="left:35px;top:119px;font-size:10.6px;color:#000;white-space:nowrap">Commonly Used Blocks</div><div class="a" style="left:26px;top:125px;width:8px;height:1px;background:repeating-linear-gradient(90deg,#000 0 1px,transparent 1px 2px)"></div><div class="a" style="left:35px;top:137px;font-size:10.6px;color:#000;white-space:nowrap">Continuous</div><div class="a" style="left:26px;top:143px;width:8px;height:1px;background:repeating-linear-gradient(90deg,#000 0 1px,transparent 1px 2px)"></div><div class="a" style="left:35px;top:155px;font-size:10.6px;color:#000;white-space:nowrap">Discontinuities</div><div class="a" style="left:26px;top:161px;width:8px;height:1px;background:repeating-linear-gradient(90deg,#000 0 1px,transparent 1px 2px)"></div><div class="a" style="left:35px;top:173px;font-size:10.6px;color:#000;white-space:nowrap">Discrete</div><div class="a" style="left:26px;top:179px;width:8px;height:1px;background:repeating-linear-gradient(90deg,#000 0 1px,transparent 1px 2px)"></div><div class="a" style="left:35px;top:191px;font-size:10.6px;color:#000;white-space:nowrap">Logic and Bit Operations</div><div class="a" style="left:26px;top:197px;width:8px;height:1px;background:repeating-linear-gradient(90deg,#000 0 1px,transparent 1px 2px)"></div><div class="a" style="left:35px;top:209px;font-size:10.6px;color:#000;white-space:nowrap">Lookup Tables</div><div class="a" style="left:26px;top:215px;width:8px;height:1px;background:repeating-linear-gradient(90deg,#000 0 1px,transparent 1px 2px)"></div><div class="a" style="left:35px;top:227px;font-size:10.6px;color:#000;white-space:nowrap">Math Operations</div><div class="a" style="left:26px;top:233px;width:8px;height:1px;background:repeating-linear-gradient(90deg,#000 0 1px,transparent 1px 2px)"></div><div class="a" style="left:35px;top:245px;font-size:10.6px;color:#000;white-space:nowrap">Model Verification</div><div class="a" style="left:26px;top:251px;width:8px;height:1px;background:repeating-linear-gradient(90deg,#000 0 1px,transparent 1px 2px)"></div><div class="a" style="left:35px;top:263px;font-size:10.6px;color:#000;white-space:nowrap">Model-Wide Utilities</div><div class="a" style="left:26px;top:269px;width:8px;height:1px;background:repeating-linear-gradient(90deg,#000 0 1px,transparent 1px 2px)"></div><div class="a" style="left:35px;top:281px;font-size:10.6px;color:#000;white-space:nowrap">Ports &amp; Subsystems</div><div class="a" style="left:26px;top:287px;width:8px;height:1px;background:repeating-linear-gradient(90deg,#000 0 1px,transparent 1px 2px)"></div><div class="a" style="left:35px;top:299px;font-size:10.6px;color:#000;white-space:nowrap">Signal Attributes</div><div class="a" style="left:26px;top:305px;width:8px;height:1px;background:repeating-linear-gradient(90deg,#000 0 1px,transparent 1px 2px)"></div><div class="a" style="left:35px;top:317px;font-size:10.6px;color:#000;white-space:nowrap">Signal Routing</div><div class="a" style="left:26px;top:323px;width:8px;height:1px;background:repeating-linear-gradient(90deg,#000 0 1px,transparent 1px 2px)"></div><div class="a" style="left:35px;top:335px;font-size:10.6px;color:#000;white-space:nowrap">Sinks</div><div class="a" style="left:26px;top:341px;width:8px;height:1px;background:repeating-linear-gradient(90deg,#000 0 1px,transparent 1px 2px)"></div><div class="a" style="left:35px;top:353px;font-size:10.6px;color:#000;white-space:nowrap">Sources</div><div class="a" style="left:26px;top:359px;width:8px;height:1px;background:repeating-linear-gradient(90deg,#000 0 1px,transparent 1px 2px)"></div><div class="a" style="left:35px;top:371px;font-size:10.6px;color:#000;white-space:nowrap">User-Defined Functions</div><div class="a" style="left:26px;top:377px;width:8px;height:1px;background:repeating-linear-gradient(90deg,#000 0 1px,transparent 1px 2px)"></div><div class="a" style="left:35px;top:389px;font-size:10.6px;color:#000;white-space:nowrap">Additional Math &amp; Discrete</div><div class="a" style="left:26px;top:395px;width:8px;height:1px;background:repeating-linear-gradient(90deg,#000 0 1px,transparent 1px 2px)"></div><div class="a" style="left:20px;top:391px;width:9px;height:9px;border:1px solid #999;background:#fff"><div class="a" style="left:1px;top:3px;width:5px;height:1px;background:#000"></div><div class="a" style="left:3px;top:1px;width:1px;height:5px;background:#000"></div></div><div class="a" style="left:35px;top:407px;font-size:10.6px;color:#000;white-space:nowrap">Control System Toolbox</div><svg class="a" style="left:15px;top:405px" width="16" height="16"><use href="#libicon"/></svg><div class="a" style="left:3px;top:413px;width:10px;height:1px;background:repeating-linear-gradient(90deg,#000 0 1px,transparent 1px 2px)"></div><div class="a" style="left:35px;top:425px;font-size:10.6px;color:#000;white-space:nowrap">Data Acquisition Toolbox</div><svg class="a" style="left:15px;top:423px" width="16" height="16"><use href="#libicon"/></svg><div class="a" style="left:3px;top:431px;width:10px;height:1px;background:repeating-linear-gradient(90deg,#000 0 1px,transparent 1px 2px)"></div><div class="a" style="left:35px;top:443px;font-size:10.6px;color:#000;white-space:nowrap">ECRobot NXT Blockset</div><svg class="a" style="left:15px;top:441px" width="16" height="16"><use href="#libicon"/></svg><div class="a" style="left:3px;top:449px;width:10px;height:1px;background:repeating-linear-gradient(90deg,#000 0 1px,transparent 1px 2px)"></div><div class="a" style="left:0px;top:445px;width:9px;height:9px;border:1px solid #999;background:#f4f4f4"><div class="a" style="left:1px;top:3px;width:5px;height:1px;background:#000"></div><div class="a" style="left:3px;top:1px;width:1px;height:5px;background:#000"></div></div><div class="a" style="left:35px;top:461px;font-size:10.6px;color:#000;white-space:nowrap">Embedded IDE Link</div><svg class="a" style="left:15px;top:459px" width="16" height="16"><use href="#libicon"/></svg><div class="a" style="left:3px;top:467px;width:10px;height:1px;background:repeating-linear-gradient(90deg,#000 0 1px,transparent 1px 2px)"></div><div class="a" style="left:0px;top:463px;width:9px;height:9px;border:1px solid #999;background:#f4f4f4"><div class="a" style="left:1px;top:3px;width:5px;height:1px;background:#000"></div></div><div class="a" style="left:35px;top:479px;font-size:10.6px;color:#000;white-space:nowrap">Altium TASKING</div><div class="a" style="left:26px;top:485px;width:8px;height:1px;background:repeating-linear-gradient(90deg,#000 0 1px,transparent 1px 2px)"></div><div class="a" style="left:35px;top:497px;font-size:10.6px;color:#000;white-space:nowrap">Analog Devices VisualDSP++</div><div class="a" style="left:26px;top:503px;width:8px;height:1px;background:repeating-linear-gradient(90deg,#000 0 1px,transparent 1px 2px)"></div><div class="a" style="left:35px;top:515px;font-size:10.6px;color:#000;white-space:nowrap">Common</div><div class="a" style="left:26px;top:521px;width:8px;height:1px;background:repeating-linear-gradient(90deg,#000 0 1px,transparent 1px 2px)"></div><div class="a" style="left:35px;top:533px;font-size:10.6px;color:#000;white-space:nowrap">Green Hills MULTI</div><div class="a" style="left:26px;top:539px;width:8px;height:1px;background:repeating-linear-gradient(90deg,#000 0 1px,transparent 1px 2px)"></div><div class="a" style="left:35px;top:551px;font-size:10.6px;color:#000;white-space:nowrap">Texas Instruments Code Composer Studio</div><div class="a" style="left:26px;top:557px;width:8px;height:1px;background:repeating-linear-gradient(90deg,#000 0 1px,transparent 1px 2px)"></div><div class="a" style="left:35px;top:569px;font-size:10.6px;color:#000;white-space:nowrap">Gauges Blockset</div><svg class="a" style="left:15px;top:567px" width="16" height="16"><use href="#libicon"/></svg><div class="a" style="left:3px;top:575px;width:10px;height:1px;background:repeating-linear-gradient(90deg,#000 0 1px,transparent 1px 2px)"></div><div class="a" style="left:0px;top:571px;width:9px;height:9px;border:1px solid #999;background:#f4f4f4"><div class="a" style="left:1px;top:3px;width:5px;height:1px;background:#000"></div><div class="a" style="left:3px;top:1px;width:1px;height:5px;background:#000"></div></div><div class="a" style="left:35px;top:587px;font-size:10.6px;color:#000;white-space:nowrap">Image Acquisition Toolbox</div><svg class="a" style="left:15px;top:585px" width="16" height="16"><use href="#libicon"/></svg><div class="a" style="left:3px;top:593px;width:10px;height:1px;background:repeating-linear-gradient(90deg,#000 0 1px,transparent 1px 2px)"></div><div class="a" style="left:35px;top:605px;font-size:10.6px;color:#000;white-space:nowrap">Instrument Control Toolbox</div><svg class="a" style="left:15px;top:603px" width="16" height="16"><use href="#libicon"/></svg><div class="a" style="left:3px;top:611px;width:10px;height:1px;background:repeating-linear-gradient(90deg,#000 0 1px,transparent 1px 2px)"></div><div class="a" style="left:35px;top:623px;font-size:10.6px;color:#000;white-space:nowrap">Model Predictive Control Toolbox</div><svg class="a" style="left:15px;top:621px" width="16" height="16"><use href="#libicon"/></svg><div class="a" style="left:3px;top:629px;width:10px;height:1px;background:repeating-linear-gradient(90deg,#000 0 1px,transparent 1px 2px)"></div><div class="a" style="left:35px;top:641px;font-size:10.6px;color:#000;white-space:nowrap">Real-Time Windows Target</div><svg class="a" style="left:15px;top:639px" width="16" height="16"><use href="#libicon"/></svg><div class="a" style="left:3px;top:647px;width:10px;height:1px;background:repeating-linear-gradient(90deg,#000 0 1px,transparent 1px 2px)"></div><div class="a" style="left:35px;top:659px;font-size:10.6px;color:#000;white-space:nowrap">Real-Time Workshop</div><svg class="a" style="left:15px;top:657px" width="16" height="16"><use href="#libicon"/></svg><div class="a" style="left:3px;top:665px;width:10px;height:1px;background:repeating-linear-gradient(90deg,#000 0 1px,transparent 1px 2px)"></div><div class="a" style="left:0px;top:661px;width:9px;height:9px;border:1px solid #999;background:#f4f4f4"><div class="a" style="left:1px;top:3px;width:5px;height:1px;background:#000"></div><div class="a" style="left:3px;top:1px;width:1px;height:5px;background:#000"></div></div><div class="a" style="left:35px;top:677px;font-size:10.6px;color:#000;white-space:nowrap">Real-Time Workshop Embedded Coder</div><svg class="a" style="left:15px;top:675px" width="16" height="16"><use href="#libicon"/></svg><div class="a" style="left:3px;top:683px;width:10px;height:1px;background:repeating-linear-gradient(90deg,#000 0 1px,transparent 1px 2px)"></div><div class="a" style="left:0px;top:679px;width:9px;height:9px;border:1px solid #999;background:#f4f4f4"><div class="a" style="left:1px;top:3px;width:5px;height:1px;background:#000"></div><div class="a" style="left:3px;top:1px;width:1px;height:5px;background:#000"></div></div><div class="a" style="left:35px;top:695px;font-size:10.6px;color:#000;white-space:nowrap">Robust Control Toolbox</div><svg class="a" style="left:15px;top:693px" width="16" height="16"><use href="#libicon"/></svg><div class="a" style="left:3px;top:701px;width:10px;height:1px;background:repeating-linear-gradient(90deg,#000 0 1px,transparent 1px 2px)"></div><div class="a" style="left:35px;top:713px;font-size:10.6px;color:#000;white-space:nowrap">Signal Processing Blockset</div><svg class="a" style="left:15px;top:711px" width="16" height="16"><use href="#libicon"/></svg><div class="a" style="left:3px;top:719px;width:10px;height:1px;background:repeating-linear-gradient(90deg,#000 0 1px,transparent 1px 2px)"></div><div class="a" style="left:0px;top:715px;width:9px;height:9px;border:1px solid #999;background:#f4f4f4"><div class="a" style="left:1px;top:3px;width:5px;height:1px;background:#000"></div><div class="a" style="left:3px;top:1px;width:1px;height:5px;background:#000"></div></div><div class="a" style="left:35px;top:731px;font-size:10.6px;color:#000;white-space:nowrap">Simscape</div><svg class="a" style="left:15px;top:729px" width="16" height="16"><use href="#libicon"/></svg><div class="a" style="left:3px;top:737px;width:10px;height:1px;background:repeating-linear-gradient(90deg,#000 0 1px,transparent 1px 2px)"></div><div class="a" style="left:0px;top:733px;width:9px;height:9px;border:1px solid #999;background:#f4f4f4"><div class="a" style="left:1px;top:3px;width:5px;height:1px;background:#000"></div><div class="a" style="left:3px;top:1px;width:1px;height:5px;background:#000"></div></div><div class="a" style="left:300px;top:96px;width:1057px;height:651px;background:#fff;border:1px solid #898c95"></div><div class="a" style="left:506px;top:77px;width:137px;height:20px;background:linear-gradient(#f2f2f2,#e4e4e4 50%,#d9d9d9);border:1px solid #898c95;border-bottom:none"></div><div class="a" style="left:643px;top:77px;width:164px;height:20px;background:linear-gradient(#f2f2f2,#e4e4e4 50%,#d9d9d9);border:1px solid #898c95;border-bottom:none"></div><div class="a" style="left:300px;top:74px;width:207px;height:24px;background:#fff;border:1px solid #898c95;border-bottom:none"></div><div class="a" style="left:313px;top:80px;font-size:10.7px;color:#000;white-space:nowrap">Library: Simulink/Ports &amp; Subsystems</div><div class="a" style="left:518px;top:81px;font-size:11px;color:#000;white-space:nowrap">Search Results: (none)</div><div class="a" style="left:656px;top:81px;font-size:11px;color:#000;white-space:nowrap">Most Frequently Used Blocks</div><div class="a" style="left:307px;top:103px;width:155px;height:41px;border:1px solid #8cc8d4;border-radius:4px;background:linear-gradient(#f2fafc,#cdeaf0 50%,#a9dbe5)"></div><div class="a" style="left:381px;top:109px;font-size:10px;line-height:14px;color:#000;white-space:nowrap">Atomic<br>Subsystem</div><div class="a" style="left:381px;top:152px;font-size:10px;line-height:14px;color:#000;white-space:nowrap">For Each<br>Subsystem</div><div class="a" style="left:381px;top:195px;font-size:10px;line-height:14px;color:#000;white-space:nowrap">If Action<br>Subsystem</div><div class="a" style="left:381px;top:238px;font-size:10px;line-height:14px;color:#000;white-space:nowrap">Subsystem<br>Examples</div><div class="a" style="left:381px;top:281px;font-size:10px;line-height:14px;color:#000;white-space:nowrap">While Iterator<br>Subsystem</div><div class="a" style="left:538px;top:109px;font-size:10px;line-height:14px;color:#000;white-space:nowrap">CodeReuseSub-<br>system</div><div class="a" style="left:538px;top:152px;font-size:10px;line-height:14px;color:#000;white-space:nowrap">For Iterator<br>Subsystem</div><div class="a" style="left:538px;top:202px;font-size:10px;line-height:14px;color:#000;white-space:nowrap">In1</div><div class="a" style="left:538px;top:245px;font-size:10px;line-height:14px;color:#000;white-space:nowrap">Switch Case</div><div class="a" style="left:695px;top:109px;font-size:10px;line-height:14px;color:#000;white-space:nowrap">Configurable<br>Subsystem</div><div class="a" style="left:695px;top:152px;font-size:10px;line-height:14px;color:#000;white-space:nowrap">Function-Call<br>Generator</div><div class="a" style="left:695px;top:202px;font-size:10px;line-height:14px;color:#000;white-space:nowrap">Model</div><div class="a" style="left:695px;top:238px;font-size:10px;line-height:14px;color:#000;white-space:nowrap">Switch Case Act-<br>ion Subsystem</div><div class="a" style="left:852px;top:116px;font-size:10px;line-height:14px;color:#000;white-space:nowrap">Enable</div><div class="a" style="left:852px;top:152px;font-size:10px;line-height:14px;color:#000;white-space:nowrap">Function-Call<br>Split</div><div class="a" style="left:852px;top:202px;font-size:10px;line-height:14px;color:#000;white-space:nowrap">Model Variants</div><div class="a" style="left:852px;top:245px;font-size:10px;line-height:14px;color:#000;white-space:nowrap">Trigger</div><div class="a" style="left:1009px;top:109px;font-size:10px;line-height:14px;color:#000;white-space:nowrap">Enabled<br>Subsystem</div><div class="a" style="left:1009px;top:152px;font-size:10px;line-height:14px;color:#000;white-space:nowrap">Function-Call<br>Subsystem</div><div class="a" style="left:1009px;top:202px;font-size:10px;line-height:14px;color:#000;white-space:nowrap">Out1</div><div class="a" style="left:1009px;top:238px;font-size:10px;line-height:14px;color:#000;white-space:nowrap">Triggered<br>Subsystem</div><div class="a" style="left:1166px;top:109px;font-size:10px;line-height:14px;color:#000;white-space:nowrap">Enabled and Tr-<br>iggered Subsy...</div><div class="a" style="left:1166px;top:159px;font-size:10px;line-height:14px;color:#000;white-space:nowrap">If</div><div class="a" style="left:1166px;top:202px;font-size:10px;line-height:14px;color:#000;white-space:nowrap">Subsystem</div><div class="a" style="left:1166px;top:238px;font-size:10px;line-height:14px;color:#000;white-space:nowrap">Variant<br>Subsystem</div><div class="a" style="left:0;top:747px;width:1359px;height:21px;background:#f0f0f0;border-bottom:1px solid #fff"></div><div class="a" style="left:-2px;top:752px;font-size:10.7px;color:#000;white-space:nowrap">Showing: Simulink/Ports &amp; Subsystems</div><div class="a" style="left:1252px;top:0;width:105px;height:18px;border:1px solid #1e3a78;border-top:none;border-radius:0 0 5px 5px;box-shadow:0 0 0 1px rgba(160,190,240,.5);background:linear-gradient(rgba(255,255,255,.18),rgba(255,255,255,.08))"></div><div class="a" style="left:1280px;top:0;width:1px;height:17px;background:#1e3a78;box-shadow:1px 0 0 rgba(160,190,240,.6)"></div><div class="a" style="left:1307px;top:0;width:1px;height:17px;background:#1e3a78;box-shadow:1px 0 0 rgba(160,190,240,.6)"></div><div class="a" style="left:1261px;top:8px;width:12px;height:5px;background:#f0f0f0;border:1px solid #333;border-radius:1px"></div><svg class="a" style="left:1286px;top:1px" width="16" height="14"><rect x="5.5" y="1.5" width="8" height="8" rx="1" fill="#f4f4f4" stroke="#333"/><rect x="2.5" y="4.5" width="8.5" height="8.5" rx="1" fill="#f4f4f4" stroke="#333"/><rect x="5" y="7" width="3.5" height="3.5" fill="#4a80d8" stroke="#333" stroke-width=".8"/></svg><svg class="a" style="left:1325px;top:3px" width="14" height="11"><path d="M2.5,1.5 L11.5,9.5 M11.5,1.5 L2.5,9.5" stroke="#333" stroke-width="4" stroke-linecap="square"/><path d="M2.5,1.5 L11.5,9.5 M11.5,1.5 L2.5,9.5" stroke="#f4f4f4" stroke-width="2.2" stroke-linecap="square"/></svg><svg class="a" style="left:1345px;top:755px" width="14" height="13"><g fill="#9a9a9a"><rect x="10" y="3" width="1.5" height="1.5"/><rect x="7" y="6" width="1.5" height="1.5"/><rect x="10" y="6" width="1.5" height="1.5"/><rect x="4" y="9" width="1.5" height="1.5"/><rect x="7" y="9" width="1.5" height="1.5"/><rect x="10" y="9" width="1.5" height="1.5"/></g></svg><div class="a" style="left:0;top:21px;width:16px;height:747px;background:linear-gradient(90deg,rgba(0,0,0,.45),rgba(0,0,0,0))"></div></div><svg class="a" style="left:0;top:0" width="3286" height="400" viewBox="0 0 3286 400"><rect x="2243.5" y="112.5" width="53" height="22" class="bx"/><path d="M2241,120.5 L2244,123.5 L2241,126.5" class="pt"/><path d="M2296.5,120.0 L2300,123.5 L2296.5,127.0 Z" class="ft"/><text x="2246" y="125.0" font-size="5.5" class="tn">In1</text><text x="2294" y="125.0" font-size="5.5" text-anchor="end" class="tn">Out1</text><rect x="2243.5" y="155.5" width="53" height="22" class="bx"/><path d="M2241,163.5 L2244,166.5 L2241,169.5" class="pt"/><path d="M2296.5,163.0 L2300,166.5 L2296.5,170.0 Z" class="ft"/><text x="2246" y="168.0" font-size="5.5" class="tn">In1</text><text x="2294" y="168.0" font-size="5.5" text-anchor="end" class="tn">Out1</text><rect x="2263.5" y="167.5" width="6" height="6" class="bx"/><rect x="2266.5" y="164.5" width="6" height="6" class="bx" fill="#fff"/><rect x="2269.5" y="161.5" width="6" height="6" class="bx" fill="#fff"/><text x="2263" y="160" font-size="4" text-anchor="middle" class="tn">N</text><rect x="2244.5" y="196.5" width="52" height="26" class="bx"/><path d="M2242,206.5 L2245,209.5 L2242,212.5" class="pt"/><path d="M2296.5,206.0 L2300,209.5 L2296.5,213.0 Z" class="ft"/><text x="2247" y="211.0" font-size="5.5" class="tn">In1</text><text x="2294" y="211.0" font-size="5.5" text-anchor="end" class="tn">Out1</text><text x="2270" y="204" font-size="5.5" text-anchor="middle" class="tn">If { }</text><rect x="2244.5" y="238.5" width="51" height="27" fill="#4fb0f5" stroke="#222" stroke-width="1.2"/><text x="2270" y="250" font-size="7" text-anchor="middle" class="tn">Subsystem</text><text x="2270" y="260" font-size="7" text-anchor="middle" class="tn">Examples</text><rect x="2243.5" y="284.5" width="53" height="22" class="bx"/><path d="M2241,292.5 L2244,295.5 L2241,298.5" class="pt"/><path d="M2296.5,292.0 L2300,295.5 L2296.5,299.0 Z" class="ft"/><text x="2246" y="297.0" font-size="5.5" class="tn">In1</text><text x="2294" y="297.0" font-size="5.5" text-anchor="end" class="tn">Out1</text><text x="2270" y="297" font-size="4.5" text-anchor="middle" class="tn">while { ... }</text><rect x="2400.5" y="112.5" width="53" height="22" class="bx"/><path d="M2398,120.5 L2401,123.5 L2398,126.5" class="pt"/><path d="M2453.5,120.0 L2457,123.5 L2453.5,127.0 Z" class="ft"/><text x="2403" y="125.0" font-size="5.5" class="tn">In1</text><text x="2451" y="125.0" font-size="5.5" text-anchor="end" class="tn">Out1</text><rect x="2400.5" y="155.5" width="53" height="22" class="bx"/><path d="M2398,163.5 L2401,166.5 L2398,169.5" class="pt"/><path d="M2453.5,163.0 L2457,166.5 L2453.5,170.0 Z" class="ft"/><text x="2403" y="168.0" font-size="5.5" class="tn">In1</text><text x="2451" y="168.0" font-size="5.5" text-anchor="end" class="tn">Out1</text><text x="2420" y="168" font-size="4.5" text-anchor="middle" class="tn">for { ... }</text><rect x="2403.5" y="198.5" width="46" height="22" rx="11" class="bx"/><path d="M2450,204.5 L2456.5,209.5 L2450,214.5" class="pt"/><text x="2426" y="215" font-size="14" text-anchor="middle" class="tn">1</text><rect x="2400.5" y="242.5" width="53" height="21" class="bx"/><path d="M2398,250 L2401,252.5 L2398,255" class="pt"/><path d="M2453.5,245 L2456,247 L2453.5,249 Z M2453.5,256 L2456,258 L2453.5,260 Z" class="ft"/><text x="2405" y="255" font-size="4.5" text-anchor="start" class="tn">u1</text><text x="2451" y="249" font-size="4.5" text-anchor="end" class="tn">case [ 1 ]:</text><text x="2451" y="260" font-size="4.5" text-anchor="end" class="tn">default:</text><rect x="2557.5" y="112.5" width="53" height="22" class="bx"/><text x="2583" y="125" font-size="5" text-anchor="middle" class="tn">Master</text><rect x="2572.5" y="153.5" width="24" height="26" class="bx"/><path d="M2597,161.5 L2601,166 L2597,170.5" class="pt"/><text x="2584" y="171" font-size="11" text-anchor="middle" class="tn">f()</text><rect x="2557.5" y="201.5" width="53" height="17" class="bx"/><text x="2583" y="207" font-size="3.5" text-anchor="middle" class="tn">Model Name</text><rect x="2558.5" y="240.5" width="51" height="25" class="bx"/><path d="M2556,250.0 L2559,253.0 L2556,256.0" class="pt"/><path d="M2609.5,249.5 L2613,253.0 L2609.5,256.5 Z" class="ft"/><text x="2561" y="254.5" font-size="5.5" class="tn">In1</text><text x="2607" y="254.5" font-size="5.5" text-anchor="end" class="tn">Out1</text><text x="2583" y="247" font-size="6" text-anchor="middle" class="tn">case: { }</text><rect x="2728.5" y="110.5" width="26" height="26" class="bx"/><path d="M2733,129.5 H2737.5 V116.5 H2745.5 V129.5 H2750" class="pt"/><circle cx="2741" cy="166" r="12.5" class="bx"/><path d="M2722.5,161 L2727.5,166 L2722.5,171" class="pt"/><path d="M2754,162 L2759.5,166 L2754,170 Z" class="pt" fill="#fff"/><path d="M2737,177.5 L2741,181 L2745,177.5" class="pt"/><text x="2742" y="171" font-size="11" text-anchor="middle" class="tn"><tspan font-style="italic">f</tspan></text><circle cx="2740" cy="176" r="2" class="ft"/><rect x="2714.5" y="201.5" width="53" height="17" class="bx"/><rect x="2714" y="214" width="3" height="4" class="ft"/><text x="2741" y="207" font-size="3.5" text-anchor="middle" class="tn">Model Name</text><rect x="2728.5" y="239.5" width="26" height="26" class="bx"/><path d="M2734,259.5 H2741.5 V247.5 H2749 M2737.5,251.5 L2741.5,246.5 L2745.5,251.5" class="pt"/><rect x="2871.5" y="112.5" width="53" height="22" class="bx"/><path d="M2869,120.5 L2872,123.5 L2869,126.5" class="pt"/><path d="M2924.5,120.0 L2928,123.5 L2924.5,127.0 Z" class="ft"/><text x="2874" y="125.0" font-size="5.5" class="tn">In1</text><text x="2922" y="125.0" font-size="5.5" text-anchor="end" class="tn">Out1</text><path d="M2894,120.5 H2896.5 V115.5 H2899.5 V120.5 H2902 M2895.5,110 L2899,113 M2899,110 L2895.5,113" class="pt"/><rect x="2871.5" y="155.5" width="53" height="22" class="bx"/><path d="M2869,163.5 L2872,166.5 L2869,169.5" class="pt"/><path d="M2924.5,163.0 L2928,166.5 L2924.5,170.0 Z" class="ft"/><text x="2874" y="168.0" font-size="5.5" class="tn">In1</text><text x="2922" y="168.0" font-size="5.5" text-anchor="end" class="tn">Out1</text><text x="2897" y="162" font-size="4.5" text-anchor="middle" class="tn">function()</text><path d="M2895.5,152 L2899,155 M2899,152 L2895.5,155" class="pt"/><rect x="2874.5" y="198.5" width="47" height="22" rx="11" class="bx"/><path d="M2868,204.5 L2874.5,209.5 L2868,214.5" class="pt"/><text x="2898" y="215" font-size="14" text-anchor="middle" class="tn">1</text><rect x="2871.5" y="241.5" width="53" height="22" class="bx"/><path d="M2869,249.5 L2872,252.5 L2869,255.5" class="pt"/><path d="M2924.5,249.0 L2928,252.5 L2924.5,256.0 Z" class="ft"/><text x="2874" y="254.0" font-size="5.5" class="tn">In1</text><text x="2922" y="254.0" font-size="5.5" text-anchor="end" class="tn">Out1</text><path d="M2895,250 H2898 V245 M2896.5,247 L2898,245 L2899.5,247 M2895.5,238 L2899,241 M2899,238 L2895.5,241" class="pt"/><rect x="3028.5" y="112.5" width="53" height="22" class="bx"/><path d="M3026,120.5 L3029,123.5 L3026,126.5" class="pt"/><path d="M3081.5,120.0 L3085,123.5 L3081.5,127.0 Z" class="ft"/><text x="3031" y="125.0" font-size="5.5" class="tn">In1</text><text x="3079" y="125.0" font-size="5.5" text-anchor="end" class="tn">Out1</text><path d="M3038,120.5 H3040.5 V115.5 H3043.5 V120.5 H3046 M3039.5,110 L3043,113 M3043,110 L3039.5,113 M3062,120 H3065 V115 M3063.5,117 L3065,115 L3066.5,117 M3062.5,110 L3066,113 M3066,110 L3062.5,113" class="pt"/><rect x="3028.5" y="156.5" width="53" height="21" class="bx"/><path d="M3026,163.5 L3029,166.5 L3026,169.5" class="pt"/><path d="M3081.5,159 L3084,161 L3081.5,163 Z M3081.5,170 L3084,172 L3081.5,174 Z" class="ft"/><text x="3031" y="169" font-size="4.5" text-anchor="start" class="tn">u1</text><text x="3079" y="163" font-size="4.5" text-anchor="end" class="tn">if(u1 ~= 0)</text><text x="3076" y="173" font-size="4.5" text-anchor="end" class="tn">else</text><rect x="3028.5" y="198.5" width="53" height="22" class="bx"/><path d="M3026,206.5 L3029,209.5 L3026,212.5" class="pt"/><path d="M3081.5,206.0 L3085,209.5 L3081.5,213.0 Z" class="ft"/><text x="3031" y="211.0" font-size="5.5" class="tn">In1</text><text x="3079" y="211.0" font-size="5.5" text-anchor="end" class="tn">Out1</text><rect x="3028.5" y="241.5" width="53" height="22" class="bx"/><path d="M3026,249.5 L3029,252.5 L3026,255.5" class="pt"/><path d="M3081.5,249.0 L3085,252.5 L3081.5,256.0 Z" class="ft"/><text x="3031" y="254.0" font-size="5.5" class="tn">In1</text><text x="3079" y="254.0" font-size="5.5" text-anchor="end" class="tn">Out1</text><rect x="3029.5" y="256.5" width="5" height="5" class="bx"/></svg></body></html>
